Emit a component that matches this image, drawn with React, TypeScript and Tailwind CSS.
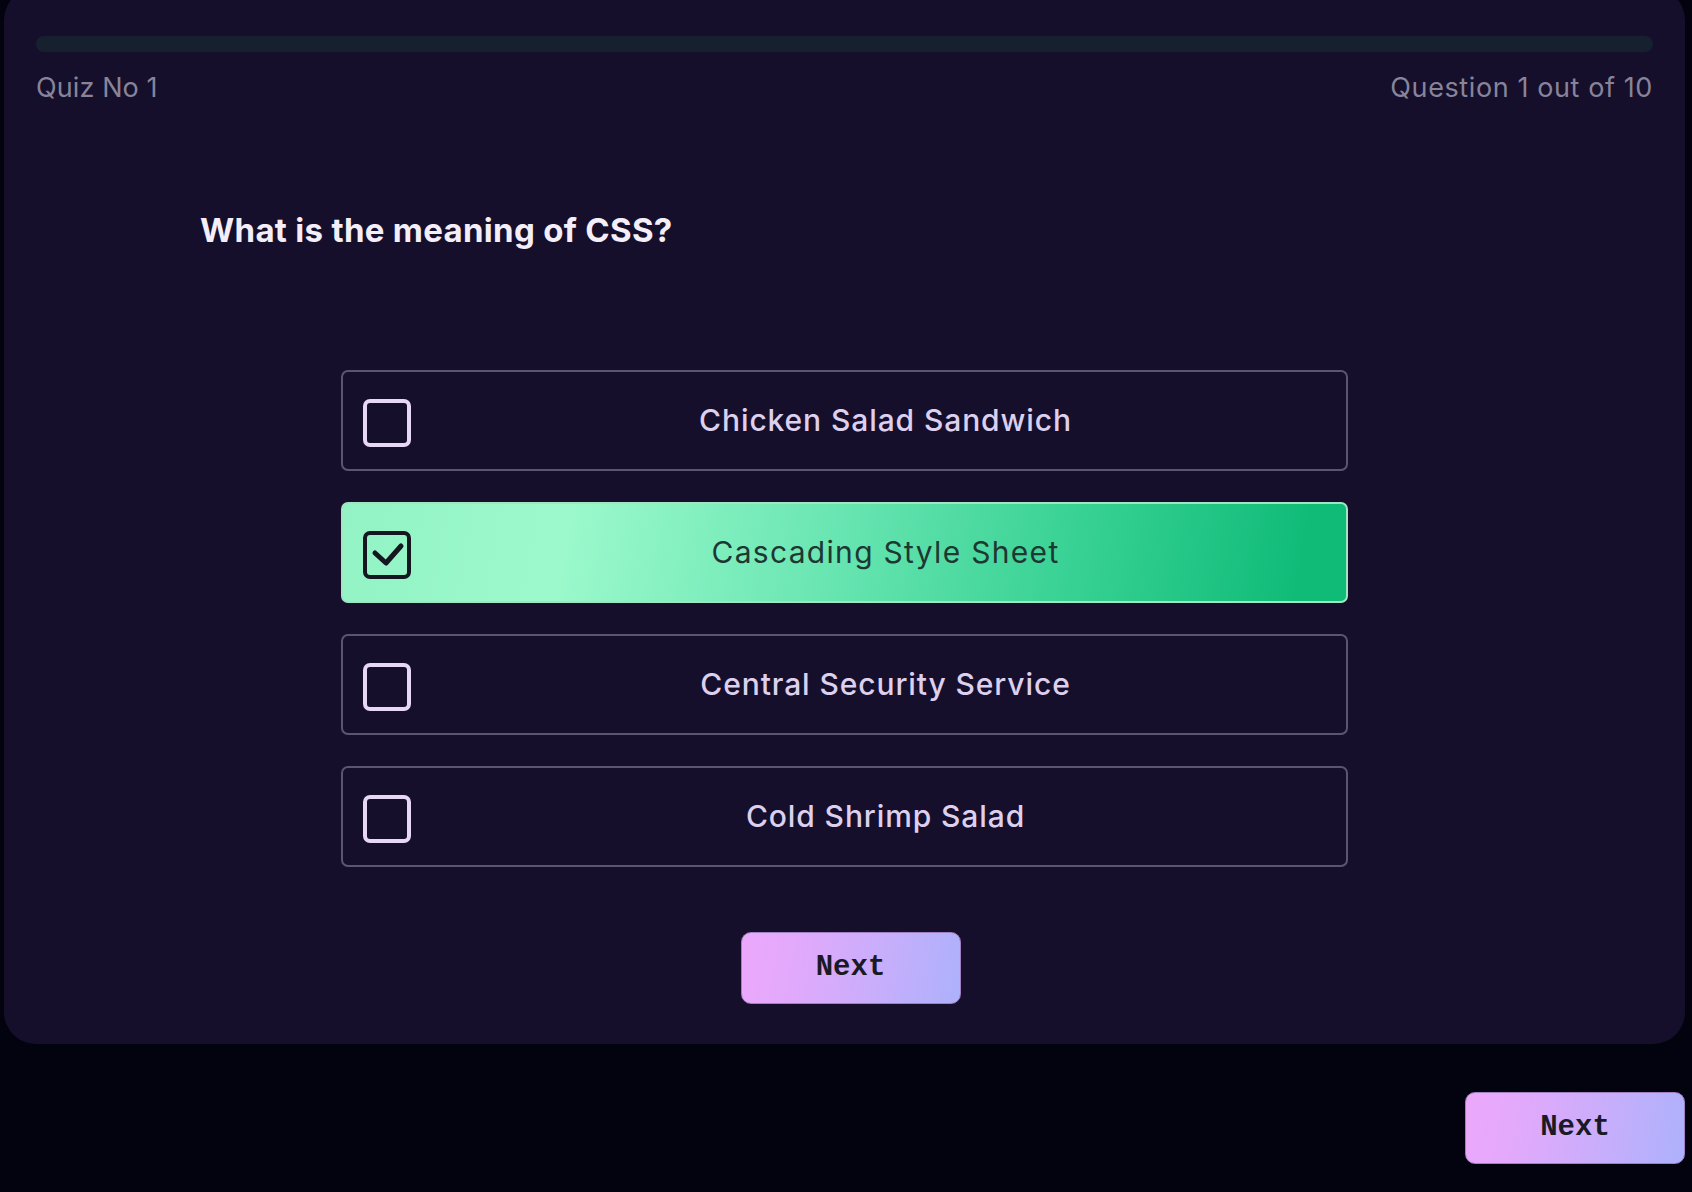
import React, { useState } from 'react';

// quiz answers
const answers = [
  'Chicken Salad Sandwich',
  'Cascading Style Sheet',
  'Central Security Service',
  'Cold Shrimp Salad',
];

const CheckBox = ({ checked }: { checked: boolean }) => (
  <span
    className={`mt-1 flex h-12 w-12 shrink-0 items-center justify-center rounded-[7px] border-4 ${
      checked ? 'border-[#141620]' : 'border-[#e6d7f4]'
    }`}
  >
    {checked && (
      <svg viewBox="0 0 40 40" className="h-10 w-10">
        <path d="M8 18 L19 28 L34 11" fill="none" stroke="#141620" strokeWidth="5" strokeLinecap="round" strokeLinejoin="round" />
      </svg>
    )}
  </span>
);

const NextButton = () => (
  <button
    className="h-[72px] w-[220px] rounded-[10px] border border-[#a27fc0] bg-[linear-gradient(100deg,#eca8fb_0%,#e2a9fb_25%,#c6aefb_65%,#adb1fb_100%)] text-[29px] font-bold text-[#1a1a26]"
    style={{ fontFamily: '"Liberation Mono", monospace' }}
  >
    Next
  </button>
);

export default function App() {
  const [selected, setSelected] = useState(1);

  return (
    <div className="min-h-screen bg-[#03030f] pb-8 pl-1 pr-[7px]" style={{ fontFamily: 'Inter, "Noto Sans", sans-serif' }}>
      {/* card */}
      <div className="-mt-3 rounded-[32px] bg-[#150f2c] px-8 pb-10 pt-12">
        <div className="h-4 w-full rounded-full bg-[#17202f]" />

        <div className="mt-[18px] flex items-center justify-between text-[27px] leading-9 text-[#87849a]">
          <span className="tracking-[0.1px]">Quiz No 1</span>
          <span className="tracking-[0.6px]">Question 1 out of 10</span>
        </div>

        <h1 className="mt-[106px] pl-[164px] text-[33px] font-bold leading-9 tracking-[0.3px] text-[#f3eef8]">
          What is the meaning of CSS?
        </h1>

        {/* options */}
        <div className="mx-auto mt-[122px] flex w-[1007px] flex-col gap-[31px]">
          {answers.map((a, i) => {
            const isSel = i === selected;
            return (
              <button
                key={a}
                onClick={() => setSelected(i)}
                className={`flex h-[101px] items-center rounded-[7px] border-2 pl-5 ${
                  isSel
                    ? 'border-[#9fe6c3] bg-[linear-gradient(100deg,#93f3c4_0%,#9cf9cc_22%,#6ae6b3_48%,#33cf91_75%,#10bb78_95%)]'
                    : 'border-[#5b5670] bg-transparent'
                }`}
              >
                <CheckBox checked={isSel} />
                <span
                  className={`flex-1 pl-[14px] text-center text-[30px] ${
                    isSel ? 'font-normal tracking-[1.3px] text-[#1d3833]' : 'font-medium tracking-[0.9px] text-[#ddd0ef]'
                  }`}
                >
                  {a}
                </span>
              </button>
            );
          })}
        </div>

        <div className="mt-[65px] flex justify-center pl-3">
          <NextButton />
        </div>
      </div>

      <div className="mt-12 flex justify-end">
        <NextButton />
      </div>
    </div>
  );
}
